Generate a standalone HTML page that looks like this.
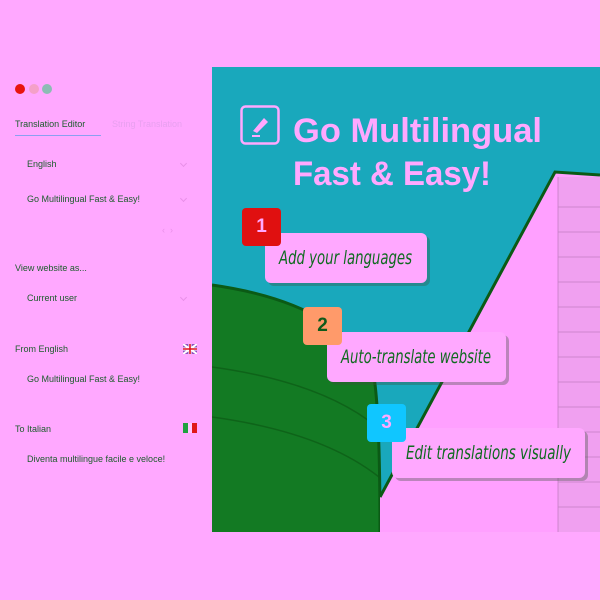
<!DOCTYPE html>
<html><head><style>
body{margin:0;width:600px;height:600px;background:#ffa8ff;position:relative;overflow:hidden;font-family:"Liberation Sans",sans-serif}
.t{position:absolute;font-size:9px;color:#1c5c2c;white-space:nowrap}
.dot{position:absolute;top:84px;width:10px;height:10px;border-radius:50%}
.chev{position:absolute;width:4px;height:4px;border-right:1px solid #e890e8;border-bottom:1px solid #e890e8;transform:rotate(45deg)}
.badge{position:absolute;width:39px;height:38px;border-radius:4px;font:bold 19px "Liberation Sans",sans-serif;text-align:center;line-height:38px}
.card{position:absolute;height:50px;background:#ffa8ff;border-radius:6px;box-shadow:3px 3px 0 rgba(60,80,60,.35)}
.card svg{position:absolute;left:0;top:0}
.card text{font:italic 19px "DejaVu Sans","Liberation Sans",sans-serif;fill:#0f6a1f}
</style></head><body>
<div class="dot" style="left:15px;background:#e8140e"></div>
<div class="dot" style="left:29px;background:#f4a0c8"></div>
<div class="dot" style="left:42px;background:#8cbcb4"></div>
<div class="t" style="left:15px;top:119px">Translation Editor</div>
<div class="t" style="left:112px;top:119px;color:#e8a0f0">String Translation</div>
<div style="position:absolute;left:15px;top:135px;width:86px;height:1px;background:#8aa0f0"></div>
<div class="t" style="left:27px;top:159px">English</div><div class="chev" style="left:181px;top:161px"></div>
<div class="t" style="left:27px;top:194px">Go Multilingual Fast &amp; Easy!</div><div class="chev" style="left:181px;top:196px"></div>
<div class="t" style="left:162px;top:225px;color:#e890e8">‹ &nbsp;›</div>
<div class="t" style="left:15px;top:263px">View website as...</div>
<div class="t" style="left:27px;top:293px">Current user</div><div class="chev" style="left:181px;top:295px"></div>
<div class="t" style="left:15px;top:344px">From English</div>
<svg style="position:absolute;left:183px;top:344px" width="14" height="10" viewBox="0 0 14 10"><rect width="14" height="10" fill="#9050c0"/><path d="M0 0L14 10M14 0L0 10" stroke="#fff" stroke-width="2"/><path d="M7 0V10M0 5H14" stroke="#fff" stroke-width="3"/><path d="M7 0V10M0 5H14" stroke="#e01020" stroke-width="1.6"/></svg>
<div class="t" style="left:27px;top:374px">Go Multilingual Fast &amp; Easy!</div>
<div class="t" style="left:15px;top:424px">To Italian</div>
<svg style="position:absolute;left:183px;top:423px" width="14" height="10"><rect width="5" height="10" fill="#20a040"/><rect x="5" width="4" height="10" fill="#ffc8ff"/><rect x="9" width="5" height="10" fill="#e01818"/></svg>
<div class="t" style="left:27px;top:454px">Diventa multilingue facile e veloce!</div>

<svg style="position:absolute;left:212px;top:67px" width="388" height="465" viewBox="0 0 388 465">
<rect width="388" height="465" fill="#19a8bc"/>
<path d="M0 218 Q120 235 160 300 Q168 330 168 465 L0 465Z" fill="#137a23"/>
<path d="M0 218 Q120 235 160 300 Q168 330 168 465" fill="none" stroke="#0b5a15" stroke-width="3"/>
<g stroke="#0d5a15" stroke-width="1.5" fill="none" opacity=".7">
<path d="M0 300 Q110 315 165 360"/><path d="M0 350 Q110 365 167 410"/>
</g>
<path d="M168 465 L168 430 L343 105 L388 108 L388 465Z" fill="#ffa0ff"/>
<path d="M168 430 L343 105 L388 108" fill="none" stroke="#0b5a15" stroke-width="3"/>
<rect x="346" y="110" width="42" height="355" fill="#f0a0f0"/>
<g stroke="#b070b0" stroke-width=".8" opacity=".7">
<path d="M346 140H388M346 165H388M346 190H388M346 215H388M346 240H388M346 265H388M346 290H388M346 315H388M346 340H388M346 365H388M346 390H388M346 415H388M346 440H388"/>
<path d="M346 110V465"/>
</g>
<rect x="29.5" y="39.5" width="37" height="37" rx="4" fill="none" stroke="#ffa8ff" stroke-width="2.5"/>
<path d="M41 64 L52 51 L56 55 L45 66 Z" fill="#ffa8ff"/><rect x="40" y="68" width="8" height="2" fill="#ffa8ff"/>
<text x="81" y="75" font-family="Liberation Sans,sans-serif" font-weight="bold" font-size="34" fill="#ffa8ff" textLength="249" lengthAdjust="spacingAndGlyphs">Go Multilingual</text>
<text x="81" y="118" font-family="Liberation Sans,sans-serif" font-weight="bold" font-size="34" fill="#ffa8ff" textLength="198" lengthAdjust="spacingAndGlyphs">Fast &amp; Easy!</text>
</svg>

<div class="card" style="left:265px;top:233px;width:162px"><svg width="162" height="50"><text x="14" y="31" textLength="133" lengthAdjust="spacingAndGlyphs">Add your languages</text></svg></div>
<div class="badge" style="left:242px;top:208px;background:#e01010;color:#ffa8ff">1</div>
<div class="card" style="left:327px;top:332px;width:179px"><svg width="179" height="50"><text x="14" y="31" textLength="150" lengthAdjust="spacingAndGlyphs">Auto-translate website</text></svg></div>
<div class="badge" style="left:303px;top:307px;background:#ff9a6a;color:#0f5a1a">2</div>
<div class="card" style="left:392px;top:428px;width:193px"><svg width="193" height="50"><text x="14" y="31" textLength="165" lengthAdjust="spacingAndGlyphs">Edit translations visually</text></svg></div>
<div class="badge" style="left:367px;top:404px;background:#10c6ff;color:#ffa8ff">3</div>
</body></html>
